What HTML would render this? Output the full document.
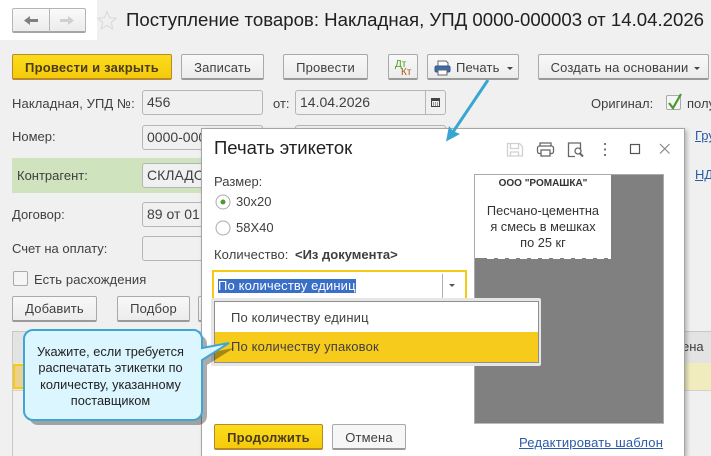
<!DOCTYPE html>
<html><head><meta charset="utf-8">
<style>
html,body{margin:0;padding:0}
body{width:711px;height:456px;overflow:hidden;background:#f0f0f0;position:relative;font-family:"Liberation Sans",sans-serif;font-size:13px;color:#3f3f3f}
.a{position:absolute;white-space:nowrap}
.t{position:absolute;white-space:nowrap;line-height:16px}
.b{position:absolute;box-sizing:border-box;height:26px;border:1px solid #a9a9a9;border-bottom:2px solid #9a9a9a;border-radius:2px;background:linear-gradient(#f8f8f8,#ececec);text-align:center;line-height:25px;color:#3f3f3f;white-space:nowrap;letter-spacing:.15px}
.y{background:linear-gradient(#fbdc1c,#f5cb0c);border:1px solid #b8892c;border-bottom:2px solid #b8892c;font-weight:bold;color:#4a3c1a;letter-spacing:.2px}
.f{position:absolute;box-sizing:border-box;height:25px;background:#f0f0f0;border:1px solid #b5b5b5;border-radius:3px;line-height:23px;padding-left:4px;white-space:nowrap;overflow:hidden;color:#3f3f3f;font-size:14px}
.tri{display:inline-block;width:0;height:0;border-left:3.5px solid transparent;border-right:3.5px solid transparent;border-top:3.5px solid #444;vertical-align:middle;margin-left:6px}
.link{color:#2a5aa8;text-decoration:underline}
</style></head><body>

<div class="a" style="left:0;top:0;width:97px;height:40px;background:#fff"></div>
<div class="a" style="left:12px;top:8px;width:74px;height:25px;box-sizing:border-box;border:1px solid #b5b5b5;border-bottom:2px solid #a5a5a5;border-radius:2px;background:linear-gradient(#fafafa,#ececec)"></div>
<div class="a" style="left:49px;top:9px;width:1px;height:23px;background:#b5b5b5"></div>
<svg class="a" style="left:0;top:0" width="125" height="40">
<path d="M28 20.500h10" stroke="#808080" stroke-width="3" fill="none"/><path d="M30 16l-6 4.500 6 4.500z" fill="#808080"/>
<path d="M60 20.500h10" stroke="#d0d0d0" stroke-width="3" fill="none"/><path d="M68 16l6 4.500-6 4.500z" fill="#d0d0d0"/>
<path d="M107 11.500l2.600 6.200 6.700.5-5.100 4.300 1.600 6.500-5.800-3.500-5.800 3.500 1.600-6.500-5.100-4.300 6.700-.5z" fill="none" stroke="#dcdcdc" stroke-width="1.200"/>
</svg>
<div class="t" style="left:126px;top:9px;font-size:18.630px;line-height:22px;color:#202020">Поступление товаров: Накладная, УПД 0000-000003 от 14.04.2026</div>

<div class="b y" style="left:12px;top:54px;width:160px">Провести и закрыть</div>
<div class="b" style="left:181px;top:54px;width:83px">Записать</div>
<div class="b" style="left:283px;top:54px;width:85px">Провести</div>
<div class="b" style="left:388px;top:54px;width:30px"></div>
<div class="t" style="left:395px;top:60px;font-size:10px;line-height:10px;color:#4a9a1e">Дт</div>
<div class="t" style="left:401px;top:68px;font-size:10px;line-height:10px;color:#a8551e">Кт</div>
<div class="b" style="left:427px;top:54px;width:92px;text-align:left;padding-left:28px">Печать<span class="tri" style="margin-left:7px"></span></div>
<svg class="a" style="left:434px;top:60px" width="18" height="16"><path d="M4 6V1h8l2 2v3" fill="#fff" stroke="#666"/><rect x="1" y="6" width="15" height="6" rx="1.500" fill="#3f6ba8" stroke="#34588c"/><rect x="4" y="10" width="9" height="5" fill="#fff" stroke="#666"/></svg>
<div class="b" style="left:538px;top:54px;width:171px;padding-left:4px">Создать на основании<span class="tri"></span></div>

<div class="t" style="left:12px;top:96px;letter-spacing:.1px">Накладная, УПД №:</div>
<div class="f" style="left:142px;top:90px;width:121px">456</div>
<div class="t" style="left:273px;top:96px">от:</div>
<div class="f" style="left:295px;top:90px;width:151px">14.04.2026</div>
<div class="a" style="left:425px;top:90px;width:1px;height:25px;background:#b5b5b5"></div>
<svg class="a" style="left:430px;top:96px" width="12" height="13"><rect x="1.500" y="2.500" width="8" height="8" fill="none" stroke="#444"/><rect x="1" y="2" width="9" height="3" fill="#444"/><path d="M3 7h1M5 7h1M7 7h1M3 9h1M5 9h1M7 9h1" stroke="#444"/></svg>
<div class="t" style="left:591px;top:96px">Оригинал:</div>
<div class="a" style="left:666px;top:95px;width:15px;height:15px;box-sizing:border-box;border:1px solid #aaa;background:#f5f5f5;border-radius:2px"></div>
<svg class="a" style="left:666px;top:92px" width="18" height="18"><path d="M3 11l4 5 8-14" fill="none" stroke="#4a9a2e" stroke-width="2.200"/></svg>
<div class="t" style="left:687px;top:96px">полу</div>

<div class="t" style="left:12px;top:129px">Номер:</div>
<div class="f" style="left:142px;top:125px;width:121px">0000-000003</div>
<div class="f" style="left:295px;top:125px;width:151px"></div>
<div class="a" style="left:12px;top:158px;width:200px;height:35px;background:#cfe3bf"></div>
<div class="t" style="left:17px;top:168px">Контрагент:</div>
<div class="f" style="left:142px;top:163px;width:121px">СКЛАДСКОЙ</div>
<div class="f" style="left:295px;top:163px;width:151px"></div>
<div class="t" style="left:12px;top:207px">Договор:</div>
<div class="f" style="left:142px;top:202px;width:121px">89 от 01.01.2026</div>
<div class="t" style="left:12px;top:241px">Счет на оплату:</div>
<div class="f" style="left:142px;top:236px;width:121px"></div>
<div class="a" style="left:13px;top:271px;width:15px;height:15px;box-sizing:border-box;border:1px solid #aaa;border-radius:2px;background:#f5f5f5"></div>
<div class="t" style="left:34px;top:272px;letter-spacing:.1px">Есть расхождения</div>
<div class="b" style="left:12px;top:296px;width:85px;line-height:24px">Добавить</div>
<div class="b" style="left:117px;top:296px;width:73px;line-height:24px">Подбор</div>
<div class="b" style="left:198px;top:296px;width:60px"></div>

<div class="a" style="left:12px;top:331px;width:699px;height:125px;box-sizing:border-box;border:1px solid #c8c8c8;border-right:0;border-bottom:0;background:#f0f0f0"></div>
<div class="a" style="left:13px;top:332px;width:698px;height:31px;background:#e3e3e3"></div>
<div class="a" style="left:13px;top:363px;width:698px;height:27px;background:#f1ecbd;border-bottom:1px solid #d2d2d2"></div>
<div class="a" style="left:13px;top:364px;width:190px;height:25px;box-sizing:border-box;border:2px solid #f6c915;background:#ecd18c"></div>
<div class="t" style="left:22px;top:339px">N</div>
<div class="t" style="left:682px;top:339px;width:29px;overflow:hidden">ена</div>

<div class="t link" style="left:695px;top:128px">Гру</div>
<div class="t link" style="left:695px;top:167px">НД</div>

<!-- dialog -->
<div class="a" style="left:201px;top:128px;width:484px;height:328px;box-sizing:border-box;background:#fff;border:1px solid #a5a5a5;border-bottom:0;box-shadow:2px 2px 4px rgba(0,0,0,.25)"></div>
<div class="t" style="left:214px;top:138px;font-size:18.500px;line-height:20px;color:#222">Печать этикеток</div>
<svg class="a" style="left:500px;top:135px" width="175" height="26" fill="none">
<path d="M7.500 8.500h12l3 3v9.500h-15z M10.500 8.500v5h8v-5 M10.500 21v-4h8v4" stroke="#d0d0d0" stroke-width="1.300"/>
<path d="M40 11V8h11V11" stroke="#666" stroke-width="1.300"/><rect x="37.500" y="11" width="16" height="7.500" rx="2" stroke="#666" stroke-width="1.300"/><rect x="41" y="15" width="9" height="6" fill="#fff" stroke="#666" stroke-width="1.300"/>
<path d="M75 21.500h-6.500v-13.500h12v6" stroke="#666" stroke-width="1.300"/><circle cx="78" cy="16" r="3" stroke="#666" stroke-width="1.300"/><path d="M80 18.500l3 3" stroke="#666" stroke-width="2"/>
<path d="M105 8v2M105 13.500v2M105 19v2" stroke="#777" stroke-width="2"/>
<rect x="130.500" y="9.500" width="9" height="9" stroke="#555" stroke-width="1.200"/>
<path d="M160 9l9.500 9.500M169.500 9l-9.500 9.500" stroke="#888" stroke-width="1.200"/>
</svg>
<div class="t" style="left:214px;top:174px">Размер:</div>
<svg class="a" style="left:212px;top:191px" width="24" height="50" fill="#fff"><circle cx="11" cy="11" r="7" stroke="#aaa"/><circle cx="11" cy="11" r="2.500" fill="#4a9a2e"/><circle cx="11" cy="37" r="7" stroke="#aaa"/></svg>
<div class="t" style="left:236px;top:194px">30х20</div>
<div class="t" style="left:236px;top:220px">58Х40</div>
<div class="t" style="left:214px;top:247px;letter-spacing:.1px">Количество:</div>
<div class="t" style="left:295px;top:247px;font-weight:bold">&lt;Из документа&gt;</div>
<div class="a" style="left:212px;top:270px;width:255px;height:40px;box-sizing:border-box;border:2px solid #f6c915;background:#fff"></div>
<div class="t" style="left:218px;top:279px;height:14px;line-height:14px;background:#3a6fc8;color:#fff;width:138px;letter-spacing:.15px">По количеству единиц</div>
<div class="a" style="left:442px;top:274px;width:1px;height:24px;background:#b0b0b0"></div>
<div class="a" style="left:449px;top:284px;border-left:3px solid transparent;border-right:3px solid transparent;border-top:3px solid #555"></div>

<div class="a" style="left:474px;top:174px;width:190px;height:250px;box-sizing:border-box;background:#808080;border:1px solid #aaa;border-bottom-color:#bbb"></div>
<div class="a" style="left:475px;top:175px;width:136px;height:83px;background:#fff;text-align:center;color:#333;white-space:normal">
<div style="font-size:10px;font-weight:bold;line-height:12px;margin-top:3px">ООО "РОМАШКА"</div>
<div style="font-size:12.800px;line-height:16px;margin-top:13px">Песчано-цементна<br>я смесь в мешках<br>по 25 кг</div>
</div>
<div class="a" style="left:487px;top:258px;width:124px;height:1px;background:repeating-linear-gradient(90deg,#fff 0 7px,#808080 7px 11px)"></div>

<div class="a" style="left:211px;top:298px;width:330px;height:68px;box-sizing:border-box;background:#e6e6e6;border-radius:2px"></div>
<div class="a" style="left:214px;top:301px;width:325px;height:62px;box-sizing:border-box;border:1px solid #8f8f8f;background:#fff"></div>
<div class="a" style="left:215px;top:332px;width:323px;height:30px;background:#f6cb1c"></div>
<div class="t" style="left:231px;top:310px;letter-spacing:.15px">По количеству единиц</div>
<div class="t" style="left:231px;top:339px;letter-spacing:.15px">По количеству упаковок</div>

<div class="b y" style="left:214px;top:424px;width:109px;height:26px">Продолжить</div>
<div class="b" style="left:332px;top:424px;width:74px;height:26px;background:#f6f6f6">Отмена</div>
<div class="t link" style="left:519px;top:435px;letter-spacing:.2px">Редактировать шаблон</div>

<!-- arrow + callout -->
<svg class="a" style="left:0;top:0" width="711" height="456">
<path d="M488 80L453 132" stroke="#3aa5d0" stroke-width="3" fill="none"/>
<path d="M446 141.500L449 126l4 5 7 3z" fill="#3aa5d0"/>
<path d="M38 335h159a9 9 0 0 1 10 9v9l27-5-27 17v51a9 9 0 0 1-9 9H38a9 9 0 0 1-9-9V344a9 9 0 0 1 9-9z" fill="#000" opacity=".33"/>
<path d="M33 330h159a9 9 0 0 1 10 9v9l27-5-27 17v51a9 9 0 0 1-9 9H33a9 9 0 0 1-9-9V339a9 9 0 0 1 9-9z" fill="#dcf6ff" stroke="#41a5d2" stroke-width="2"/>
</svg>
<div class="a" style="left:22px;top:344px;width:177px;text-align:center;font-size:12.800px;line-height:16.300px;color:#222;white-space:normal">Укажите, если требуется<br>распечатать этикетки по<br>количеству, указанному<br>поставщиком</div>
</body></html>
